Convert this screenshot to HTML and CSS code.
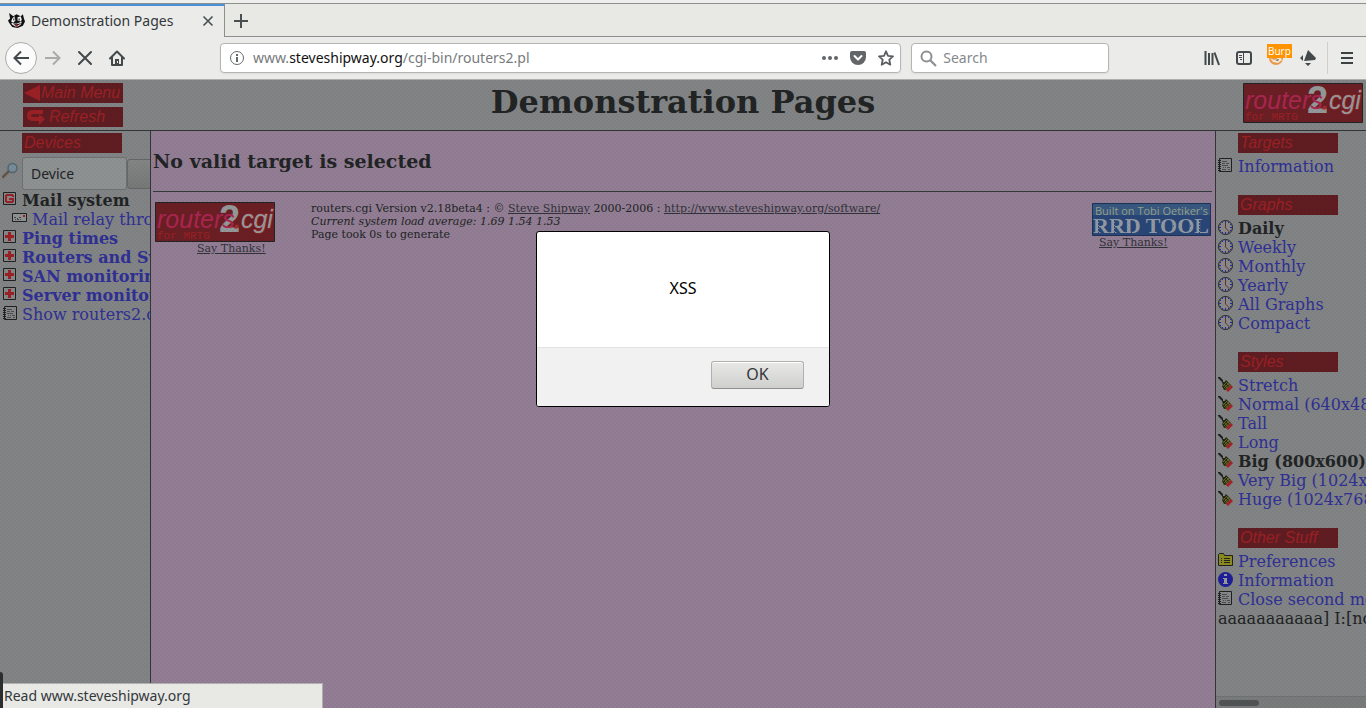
FILE: index.html
```html
<!DOCTYPE html>
<html lang="en">
<head>
<meta charset="utf-8">
<title>Demonstration Pages</title>
<link rel="stylesheet" href="styles.css">
</head>
<body>
<svg class="defs" aria-hidden="true">
  <symbol id="plus" viewBox="0 0 13 13"><path d="M.5.5h12v12H.5z" fill="#858888" stroke="#1d1f1f"/><path d="M5 2h3v3h3v3H8v3H5V8H2V5h3z" fill="#9c1f24"/></symbol>
  <symbol id="group" viewBox="0 0 13 13"><path d="M.5.5h12v12H.5z" fill="#858888" stroke="#1d1f1f"/><path d="M3 2h7v1h1v2H9V4H4v5h5V8H6V6h5v4h-1v1H3v-1H2V3h1z" fill="#9c1f24"/></symbol>
  <symbol id="router" viewBox="0 0 15 9"><path d="M.5.5h14v8H.5z" fill="#8f9292" stroke="#1d1f1f"/><path d="M11 2h2v2h-2z" fill="#9c1f24"/><path d="M2 4.500h2M5 5.500h1M7 4.500h2M3 6.500h1M5 6.500h2M8 6.500h1" stroke="#444"/></symbol>
  <symbol id="note" viewBox="0 0 14 14"><path d="M1.500.5h12v13h-12z" fill="#858888" stroke="#1d1f1f"/><path d="M0 2.500h3M0 4.500h3M0 6.500h3M0 8.500h3M0 10.500h3M0 12.500h3" stroke="#1d1f1f"/><path d="M4 3.500h5M4 5.500h3M8 5.500h3M4 7.500h6M5 9.500h1M7 9.500h1M9 9.500h3M4 11.500h4M10 11.500h2" stroke="#4a4c4c"/></symbol>
  <symbol id="clock" viewBox="0 0 15 15"><circle cx="7.500" cy="7.500" r="7" fill="#898b8b" stroke="#202222"/><path d="M7.500 1v2M7.500 12v2M1 7.500h2M12 7.500h2M4 2l1 1M11 2l-1 1M2 4l1 1M13 4l-1 1M2 11l1-1M13 11l-1-1M4 13l1-1M11 13l-1-1" stroke="#2525a8"/><path d="M7.500 3v5l4 4" fill="none" stroke="#72292b"/></symbol>
  <symbol id="brush" viewBox="0 0 15 15"><path d="M0 0h2l3 3v2l2 0 1 3-3 0-1-3-4-4z" fill="#1d1f1f"/><path d="M8 3l5 5-5 5H6L4 9z" fill="#24260e"/><path d="M5 9l4-4M6 11l5-5M7 12.500l5-5M6 7l4 5M8 5l4 4" stroke="#75762b" stroke-width=".8"/><path d="M13 8l2 2-5 5-2-2z" fill="#a71e23"/></symbol>
  <symbol id="folder" viewBox="0 0 15 13"><path d="M.5 1.500l1-1h4l1 2h8v10H.5z" fill="#8c8b1b" stroke="#1d1f1f"/><path d="M3 5.500h1M6 5.500h6M3 7.500h1M6 7.500h6M3 9.500h1M6 9.500h6" stroke="#202222"/></symbol>
  <symbol id="info" viewBox="0 0 15 15"><circle cx="7.500" cy="7.500" r="7.500" fill="#1d1d9a"/><path d="M6 2h3v2H6zM5 6h4v5h1v1H5v-1h1V7H5z" fill="#999b9b"/></symbol>
</svg>

<header class="chrome">
  <div class="tabs">
    <div class="tab">
      <svg class="favicon" viewBox="0 0 16 16"><path d="M1 1l4 3 3-2 4 2 2-2 1 4 1 3-2 4-5 2-5-1-3-4-1-2 2-2z" fill="#111"/><path d="M4 6l2-2 1 4-2 2-2-1zM9 5l3-1 1 3-1 2-3-1zM3 10l5 1 5-2-1 3-4 2-4-2z" fill="#f4f4f4"/><path d="M5 6h1v2H5zM10 6h1v2h-1z" fill="#111"/><path d="M6 12l5-1-3 3z" fill="#b21a2c"/><path d="M5 11l3 1 4-1" fill="none" stroke="#111" stroke-width=".8"/></svg>
      <span class="tab-title">Demonstration Pages</span>
      <button class="plain tab-close" aria-label="Close tab"><svg width="12" height="12" viewBox="0 0 12 12"><path d="M1.500 1.500l9 9M10.500 1.500l-9 9" stroke="#4a4f52" stroke-width="1.600"/></svg></button>
    </div>
    <button class="plain new-tab" aria-label="New tab"><svg width="14" height="14" viewBox="0 0 14 14"><path d="M7 0v14M0 7h14" stroke="#4a4f52" stroke-width="2"/></svg></button>
  </div>
  <div class="toolbar">
    <button class="plain tool back" aria-label="Back"><svg width="16" height="16" viewBox="0 0 16 16"><path d="M8 1.500L1.500 8 8 14.500M2 8h14" fill="none" stroke="#43484b" stroke-width="2"/></svg></button>
    <button class="plain tool" aria-label="Forward" disabled><svg width="16" height="16" viewBox="0 0 16 16"><path d="M8 1.500L14.500 8 8 14.500M14 8H0" fill="none" stroke="#a9abab" stroke-width="2"/></svg></button>
    <button class="plain tool" aria-label="Stop"><svg width="16" height="16" viewBox="0 0 16 16"><path d="M2 2l12 12M14 2L2 14" stroke="#43484b" stroke-width="2" stroke-linecap="round"/></svg></button>
    <button class="plain tool" aria-label="Home"><svg width="16" height="16" viewBox="0 0 16 16"><path d="M1 8.500L8 1.500l7 7M3 7v8h10V7" fill="none" stroke="#43484b" stroke-width="2" stroke-linejoin="round" stroke-linecap="round"/><path d="M6 9h4v6H6z" fill="#43484b"/><path d="M8 11h1v2H8z" fill="#ebebe9"/></svg></button>
    <span class="spacer"></span>
    <div class="field url">
      <svg width="16" height="16" viewBox="0 0 16 16"><circle cx="8" cy="8" r="6.500" fill="none" stroke="#66696b"/><path d="M7 4h2v2H7zM7 7h2v5H7z" fill="#66696b"/></svg>
      <a class="address" href="#">www.<b>steveshipway.org</b>/cgi-bin/routers2.pl</a>
      <button class="plain" aria-label="Page actions"><svg width="16" height="16" viewBox="0 0 16 16" fill="#636669"><circle cx="2" cy="8" r="2"/><circle cx="8" cy="8" r="2"/><circle cx="14" cy="8" r="2"/></svg></button>
      <button class="plain" aria-label="Save to Pocket"><svg width="16" height="16" viewBox="0 0 16 16"><path d="M2 1h12q2 0 2 2v4a8 8 0 0 1-16 0V3q0-2 2-2z" fill="#636669"/><path d="M4.500 6L8 9.500 11.500 6" fill="none" stroke="#fff" stroke-width="2" stroke-linecap="round" stroke-linejoin="round"/></svg></button>
      <button class="plain" aria-label="Bookmark"><svg width="16" height="16" viewBox="0 0 16 16"><path d="M8 1.300l2 4.500 5 .5-3.700 3.400 1 5L8 12.200l-4.300 2.500 1-5L1 6.300l5-.5z" fill="none" stroke="#5b5e60" stroke-width="1.800" stroke-linejoin="round"/></svg></button>
    </div>
    <label class="field search">
      <svg width="17" height="17" viewBox="0 0 17 17"><circle cx="6.500" cy="6.500" r="5" fill="none" stroke="#8d8f90" stroke-width="2"/><path d="M10 10l6 6" stroke="#8d8f90" stroke-width="2.200"/></svg>
      <input type="text" placeholder="Search" aria-label="Search">
    </label>
    <span class="spacer"></span>
    <button class="plain tool" aria-label="Library"><svg width="16" height="16" viewBox="0 0 16 16"><path d="M1.500 1v14M5 3v12M8.500 3v12" stroke="#43484b" stroke-width="2"/><path d="M10.500 2.500L15 15" stroke="#43484b" stroke-width="2"/></svg></button>
    <button class="plain tool" aria-label="Sidebars"><svg width="16" height="16" viewBox="0 0 16 16"><rect x="1" y="2" width="14" height="12" rx="2" fill="none" stroke="#43484b" stroke-width="2"/><path d="M7.500 2v12M3 5.500h3M3 7.500h3M4 9.500h2" stroke="#43484b" stroke-width="1"/></svg></button>
    <button class="plain tool burp" aria-label="Proxy: Burp"><svg width="16" height="16" viewBox="0 0 16 16"><circle cx="8" cy="8" r="7" fill="#e79a4c"/><path d="M2 8l4 2 6-3 2 3-4 3-5-1z" fill="#f6e6d2"/><path d="M7 10l3 1 1-2z" fill="#55626c"/></svg><span class="badge">Burp</span></button>
    <button class="plain tool" aria-label="Extension"><svg width="16" height="16" viewBox="0 0 16 16"><path d="M8 0l8 8-1 2-11 1zM3 5v6L0 8zM5 13h6l-3 3z" fill="#43484b"/></svg></button>
    <span class="divider"></span>
    <button class="plain tool" aria-label="Menu"><svg width="12" height="12" viewBox="0 0 12 12"><path d="M0 1h12M0 6h12M0 11h12" stroke="#3b4043" stroke-width="2"/></svg></button>
  </div>
</header>

<div class="page">
  <header class="banner">
    <nav class="banner-nav">
      <a class="plate" href="#"><svg width="17" height="18" viewBox="0 0 17 18"><path d="M0 9l16-8v16z" fill="#9c1f24"/></svg>Main Menu</a>
      <a class="plate refresh" href="#"><svg width="18" height="16" viewBox="0 0 18 16"><path d="M16 3H6Q2 3 2 6.500T6 10h7" fill="none" stroke="#9c1f24" stroke-width="4"/><path d="M12 5l6 5-6 6z" fill="#9c1f24"/></svg>Refresh</a>
    </nav>
    <h1>Demonstration Pages</h1>
    <a class="banner-logo" href="#" aria-label="routers2.cgi">
      <svg class="logo" viewBox="0 0 120 40"><path class="logo-box" d="M.5.5h119v39H.5z"/><text class="logo-two" x="64" y="30">2</text><text class="logo-name" x="2" y="26">routers</text><text class="logo-cgi" x="79" y="26"><tspan class="logo-dot">.</tspan>cgi</text><text class="logo-for" x="2" y="37">for MRTG</text></svg>
    </a>
  </header>

  <div class="frames">
    <nav class="side left">
      <h2 class="plate">Devices</h2>
      <form class="find">
        <svg width="17" height="17" viewBox="0 0 17 17"><path d="M1 15l6-6" stroke="#665446" stroke-width="2.500" stroke-linecap="round"/><circle cx="10.500" cy="6" r="4.500" fill="#778d99" stroke="#526671" stroke-width="1.500"/></svg>
        <input type="text" value="Device" aria-label="Device">
        <button aria-label="Find"></button>
      </form>
      <ul class="list">
        <li><svg width="13" height="13"><use href="#group"/></svg><b>Mail system</b></li>
        <li class="nested"><svg width="15" height="9"><use href="#router"/></svg><a href="#">Mail relay throughput</a></li>
        <li><svg width="13" height="13"><use href="#plus"/></svg><a class="strong" href="#">Ping times</a></li>
        <li><svg width="13" height="13"><use href="#plus"/></svg><a class="strong" href="#">Routers and Switches</a></li>
        <li><svg width="13" height="13"><use href="#plus"/></svg><a class="strong" href="#">SAN monitoring</a></li>
        <li><svg width="13" height="13"><use href="#plus"/></svg><a class="strong" href="#">Server monitoring</a></li>
        <li><svg width="14" height="14"><use href="#note"/></svg><a href="#">Show routers2.cgi</a></li>
      </ul>
    </nav>

    <main class="content">
      <h3>No valid target is selected</h3>
      <hr>
      <footer class="credits">
        <div class="credit">
          <svg class="logo" viewBox="0 0 120 40"><path class="logo-box" d="M.5.5h119v39H.5z"/><text class="logo-two" x="64" y="30">2</text><text class="logo-name" x="2" y="26">routers</text><text class="logo-cgi" x="79" y="26"><tspan class="logo-dot">.</tspan>cgi</text><text class="logo-for" x="2" y="37">for MRTG</text></svg>
          <a class="thanks" href="#">Say Thanks!</a>
        </div>
        <p>routers.cgi Version v2.18beta4 : © <a href="#">Steve Shipway</a> 2000-2006 : <a href="#">http://www.steveshipway.org/software/</a><br><i>Current system load average: 1.69 1.54 1.53</i><br>Page took 0s to generate</p>
        <div class="credit rrd">
          <svg class="rrd-logo" viewBox="0 0 119 33"><path d="M.5.5h118v32H.5z" fill="#284577" stroke="#1c3155"/><path d="M1 1h117v11H1z" fill="#36577f"/><text class="rrd-built" x="3" y="12">Built on Tobi Oetiker's</text><text class="rrd-name" x="1" y="30">RRD TOOL</text><path d="M6.500 17v13M22.500 17v13M39.500 17v13M65.500 17v13M75 23h7M92 23h7M107.500 17v13" stroke="#284577" stroke-dasharray="2 1"/></svg>
          <a class="thanks" href="#">Say Thanks!</a>
        </div>
      </footer>
    </main>

    <nav class="side right">
      <section>
        <h2 class="plate">Targets</h2>
        <ul class="list"><li><svg width="14" height="14"><use href="#note"/></svg><a href="#">Information</a></li></ul>
      </section>
      <section>
        <h2 class="plate">Graphs</h2>
        <ul class="list">
          <li><svg width="15" height="15"><use href="#clock"/></svg><b>Daily</b></li>
          <li><svg width="15" height="15"><use href="#clock"/></svg><a href="#">Weekly</a></li>
          <li><svg width="15" height="15"><use href="#clock"/></svg><a href="#">Monthly</a></li>
          <li><svg width="15" height="15"><use href="#clock"/></svg><a href="#">Yearly</a></li>
          <li><svg width="15" height="15"><use href="#clock"/></svg><a href="#">All Graphs</a></li>
          <li><svg width="15" height="15"><use href="#clock"/></svg><a href="#">Compact</a></li>
        </ul>
      </section>
      <section>
        <h2 class="plate">Styles</h2>
        <ul class="list">
          <li><svg width="15" height="15"><use href="#brush"/></svg><a href="#">Stretch</a></li>
          <li><svg width="15" height="15"><use href="#brush"/></svg><a href="#">Normal (640x480)</a></li>
          <li><svg width="15" height="15"><use href="#brush"/></svg><a href="#">Tall</a></li>
          <li><svg width="15" height="15"><use href="#brush"/></svg><a href="#">Long</a></li>
          <li><svg width="15" height="15"><use href="#brush"/></svg><b>Big (800x600)</b></li>
          <li><svg width="15" height="15"><use href="#brush"/></svg><a href="#">Very Big (1024x768)</a></li>
          <li><svg width="15" height="15"><use href="#brush"/></svg><a href="#">Huge (1024x768)</a></li>
        </ul>
      </section>
      <section>
        <h2 class="plate">Other Stuff</h2>
        <ul class="list">
          <li><svg width="15" height="13"><use href="#folder"/></svg><a href="#">Preferences</a></li>
          <li><svg width="15" height="15"><use href="#info"/></svg><a href="#">Information</a></li>
          <li><svg width="14" height="14"><use href="#note"/></svg><a href="#">Close second menu</a></li>
        </ul>
        <p class="debug">aaaaaaaaaaa] I:[none]</p>
      </section>
      <div class="scrollbar"><span class="thumb"></span></div>
    </nav>
  </div>

  <div class="modal" role="alertdialog" aria-labelledby="message">
    <p id="message">XSS</p>
    <div class="actions"><button>OK</button></div>
  </div>
</div>
<div class="edge"></div>
<div class="status">Read www.steveshipway.org</div>
</body>
</html>
```
FILE: styles.css
```css
* { box-sizing: border-box; }

body {
  margin: 0;
  height: 100vh;
  display: flex;
  flex-direction: column;
  overflow: hidden;
  position: relative;
  font: 14px/20px "Noto Sans", sans-serif;
  color: #33383b;
}

h1, h2, h3, p, ul { margin: 0; padding: 0; }
svg { display: block; flex: none; }
.defs { position: absolute; width: 0; height: 0; }

.plain {
  display: flex;
  align-items: center;
  justify-content: center;
  border: 0;
  padding: 0;
  background: none;
}

/* Browser window */
.chrome { flex: none; background: #ebebe9; border-top: 3px solid #eeeeed; }

.tabs {
  display: flex;
  height: 34px;
  border-top: 1px solid #8d8f8c;
  background: linear-gradient(#8d8f8c, #8d8f8c) bottom / 100% 1px no-repeat #e8e8e5;
}

.tab {
  display: flex;
  align-items: center;
  width: 225px;
  padding: 0 10px 2px 8px;
  border-top: 2px solid #4a90d9;
  border-right: 1px solid #8d8f8c;
  background: #ebebe9;
}

.favicon { width: 17px; height: 17px; margin-right: 6px; }
.tab-title { flex: 1; white-space: nowrap; }
.new-tab { width: 32px; }

.toolbar {
  display: flex;
  align-items: center;
  height: 43px;
  padding: 0 3px 0 5px;
  border-bottom: 1px solid #aeafac;
}

.tool { flex: none; width: 32px; height: 32px; }
.back { border: 1px solid #aaaca9; border-radius: 50%; background: #fbfbfb; }
.spacer { flex: 87 1 87px; }

.field {
  display: flex;
  align-items: center;
  height: 30px;
  border: 1px solid #b5b6b3;
  border-radius: 4px;
  background: #fff;
  box-shadow: 0 1px 2px #dcdcda;
}

.url { flex: 682 1 682px; min-width: 0; gap: 12px; padding: 0 6px 0 8px; }
.search { flex: 198 1 198px; min-width: 0; gap: 6px; margin-left: 10px; padding: 0 8px; }

.address {
  flex: 1;
  overflow: hidden;
  white-space: nowrap;
  margin-left: -4px;
  color: #777b7d;
  text-decoration: none;
}
.address b { color: #111; font-weight: 400; }

.search input {
  width: 100%;
  min-width: 0;
  padding: 0;
  border: 0;
  background: none;
  font: inherit;
  outline: 0;
}
.search input::placeholder { color: #85888a; }

.burp { position: relative; }
.badge {
  position: absolute;
  top: 2px;
  left: 7px;
  padding: 0 1px;
  background: #ff9400;
  color: #fff;
  font: 10px/14px "Open Sans", sans-serif;
}
.divider { width: 1px; height: 32px; margin: 0 3px; background: #cfd0cd; }

/* Dimmed page */
.page {
  flex: 1;
  min-height: 0;
  display: flex;
  flex-direction: column;
  position: relative;
  background: #828485;
  color: #202222;
  font: 16px/19px "DejaVu Serif", serif;
}

.page::after {
  content: "";
  position: absolute;
  inset: 0;
  pointer-events: none;
  background:
    repeating-conic-gradient(rgba(60, 68, 75, 0.07) 0 25%, transparent 0 50%) 0 0 / 4px 4px;
}

.page a { color: #2e2e95; text-decoration: none; }

.banner {
  flex: none;
  display: grid;
  grid-template-columns: 1fr auto 1fr;
  align-items: start;
  height: 51px;
  padding: 3px 3px 0 23px;
  border-bottom: 1px solid #303434;
}
.banner-nav { display: grid; gap: 4px; justify-content: start; }
.banner h1 { margin-right: 20px; font-size: 32px; line-height: 38px; }
.banner-logo { justify-self: end; }

.logo { width: 120px; height: 40px; }
.logo-box { fill: #6b1d22; stroke: #202222; }
.logo-two { font: bold 38px "Liberation Sans", sans-serif; fill: #969999; }
.logo-name { font: italic 25px "Liberation Sans", sans-serif; fill: #ab2450; }
.logo-cgi {
  font: italic 25px "Liberation Sans", sans-serif;
  fill: #969999;
  stroke: #a32a30;
  stroke-width: 1px;
  paint-order: stroke;
}
.logo-dot { fill: #a32a30; }
.logo-for { font: 11px "Liberation Mono", monospace; fill: #9c1f24; }

.page .plate {
  display: flex;
  align-items: center;
  width: 100px;
  height: 20px;
  padding-left: 2px;
  white-space: nowrap;
  background: #5f1b1f;
  color: #9c1f24;
  font: italic 16px/20px "Liberation Sans", sans-serif;
}
.page .banner .plate { padding-left: 1px; }
.page .banner .refresh { padding-left: 4px; gap: 4px; }

.frames {
  flex: 1;
  min-height: 0;
  display: grid;
  grid-template-columns: 151px 1fr 151px;
}

.side { overflow: hidden; padding-top: 2px; }
.left { border-right: 1px solid #303434; }
.left .plate { margin-left: 22px; }
.right {
  display: flex;
  flex-direction: column;
  gap: 19px;
  border-left: 1px solid #303434;
}
.right .plate { margin: 0 0 4px 22px; }

.find { display: flex; align-items: center; height: 38px; padding: 3px 0 0 2px; }
.find svg { margin-bottom: 6px; }
.find input {
  flex: none;
  width: 105px;
  height: 33px;
  margin-left: 3px;
  padding: 0 8px;
  border: 1px solid #707272;
  border-radius: 3px;
  background: #8f9292;
  color: #202222;
  font: 14px "Noto Sans", sans-serif;
}
.find button {
  flex: none;
  width: 40px;
  height: 30px;
  border: 1px solid #656767;
  border-radius: 3px;
  background: linear-gradient(#848685, #777978);
}

.list { list-style: none; }
.list li {
  display: grid;
  grid-template-columns: 20px auto;
  justify-content: start;
  height: 19px;
  padding-left: 2px;
  white-space: nowrap;
}
.list svg { margin-top: 1px; }
.left .list svg { margin-left: 1px; }
.list .nested { padding-left: 11px; grid-template-columns: 21px auto; }
.list .nested svg { margin-top: 3px; }
.strong { font-weight: bold; }
.debug { padding-left: 2px; white-space: nowrap; }

.scrollbar {
  margin-top: auto;
  height: 12px;
  padding: 3px;
  border-top: 1px solid #707272;
  background: #7a7c7c;
}
.thumb { display: block; width: 40px; height: 6px; border-radius: 3px; background: #505353; }

.content { padding: 19px 3px 0 2px; background: #937e95; }
.content h3 { font-size: 19px; line-height: 23px; }
.content hr { margin: 18px 0 9px; border: 0; border-top: 1px solid #303a38; }

.credits {
  display: grid;
  grid-template-columns: 120px 1fr 119px;
  column-gap: 36px;
  padding: 1px 1px 0 2px;
  font-size: 11px;
  line-height: 13px;
}
.credits a { color: #303036; text-decoration: underline; }
.credits .thanks { margin-left: 42px; }
.credits .rrd .thanks { margin-left: 7px; }
.rrd { padding-top: 1px; }
.rrd-logo { width: 119px; height: 33px; }
.rrd-built { font: 11px "Open Sans", sans-serif; fill: #99a08e; }
.rrd-name { font: bold 22px "Liberation Serif", serif; fill: #929ba4; }

/* Alert box */
.modal {
  position: absolute;
  z-index: 1;
  top: 151px;
  left: 50%;
  width: 294px;
  transform: translateX(-50%);
  border: 1px solid #000;
  border-radius: 3px;
  background: #fff;
  color: #000;
  font: 16px/20px "Noto Sans", sans-serif;
  overflow: hidden;
}
.modal p { padding: 46px 0 49px; text-align: center; }
.actions {
  display: flex;
  justify-content: flex-end;
  padding: 13px 25px 17px;
  border-top: 1px solid #e2e2e2;
  background: #f1f1f1;
}
.actions button {
  width: 93px;
  height: 28px;
  padding: 0 0 2px;
  border: 1px solid #b0b0ae;
  border-bottom-color: #8f908d;
  border-radius: 3px;
  background: linear-gradient(#e8e8e6, #cfcfcd);
  box-shadow: inset 0 1px #fff;
  color: #33383b;
  font: inherit;
}

.status {
  position: absolute;
  bottom: 0;
  left: 0;
  width: 323px;
  height: 25px;
  padding: 2px 4px;
  border: solid #b0b1ae;
  border-width: 1px 1px 0 0;
  background: #e8e8e5;
}
.edge {
  position: absolute;
  bottom: 0;
  left: 0;
  z-index: 1;
  width: 3px;
  height: 36px;
  border-top-right-radius: 4px;
  background: #2b2e2f;
}
```
